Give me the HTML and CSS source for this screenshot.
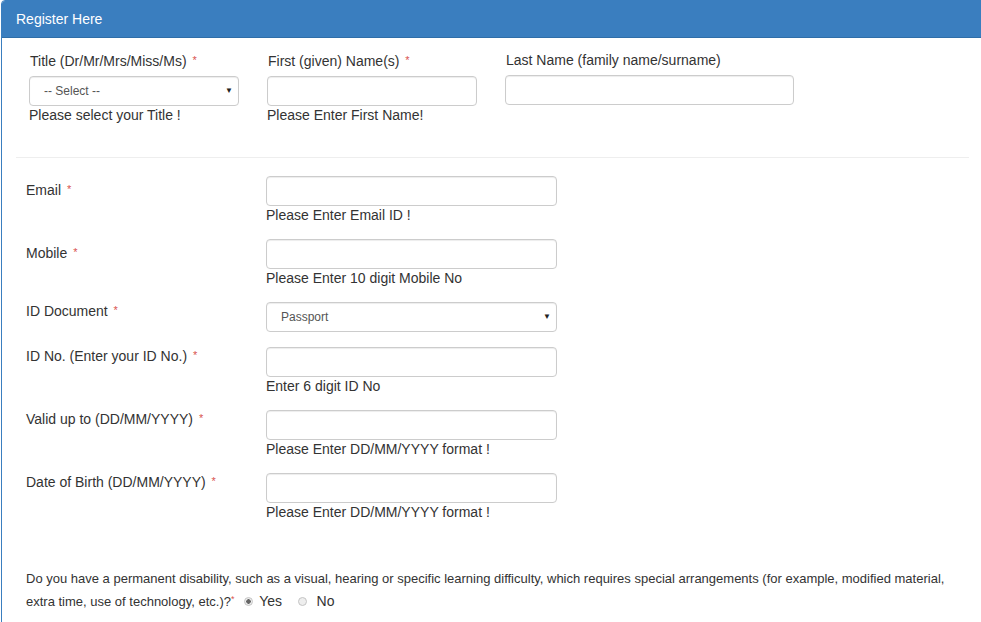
FILE: index.html
```html
<!DOCTYPE html>
<html lang="en">
<head>
    <meta charset="UTF-8">
    <meta name="viewport" content="width=device-width, initial-scale=1.0">
    <title>Register Here</title>
    <link rel="stylesheet" href="styles.css">
</head>
<body>

    <div class="panel">
        <div class="panel-heading">Register Here</div>
        <div class="panel-body">

            <!-- Name row -->
            <div class="name-row">
                <div class="field">
                    <label>Title (Dr/Mr/Mrs/Miss/Ms) <span class="req">*</span></label>
                    <div class="select-wrap">
                        <select class="control">
                            <option>-- Select --</option>
                            <option>Dr</option>
                            <option>Mr</option>
                            <option>Mrs</option>
                            <option>Miss</option>
                            <option>Ms</option>
                        </select>
                    </div>
                    <div class="help">Please select your Title !</div>
                </div>
                <div class="field">
                    <label>First (given) Name(s) <span class="req">*</span></label>
                    <input type="text" class="control">
                    <div class="help">Please Enter First Name!</div>
                </div>
                <div class="field">
                    <label>Last Name (family name/surname)</label>
                    <input type="text" class="control">
                </div>
            </div>

            <hr>

            <!-- Detail rows -->
            <div class="form-row">
                <label class="row-label first">Email <span class="req">*</span></label>
                <div>
                    <input type="text" class="control">
                    <div class="help">Please Enter Email ID !</div>
                </div>
            </div>
            <div class="form-row">
                <label class="row-label first">Mobile <span class="req">*</span></label>
                <div>
                    <input type="text" class="control">
                    <div class="help">Please Enter 10 digit Mobile No</div>
                </div>
            </div>
            <div class="form-row">
                <label class="row-label">ID Document <span class="req">*</span></label>
                <div class="select-wrap">
                    <select class="control">
                        <option>Passport</option>
                        <option>Driving Licence</option>
                        <option>National ID Card</option>
                    </select>
                </div>
            </div>
            <div class="form-row">
                <label class="row-label">ID No. (Enter your ID No.) <span class="req">*</span></label>
                <div>
                    <input type="text" class="control">
                    <div class="help">Enter 6 digit ID No</div>
                </div>
            </div>
            <div class="form-row">
                <label class="row-label">Valid up to (DD/MM/YYYY) <span class="req">*</span></label>
                <div>
                    <input type="text" class="control">
                    <div class="help">Please Enter DD/MM/YYYY format !</div>
                </div>
            </div>
            <div class="form-row">
                <label class="row-label">Date of Birth (DD/MM/YYYY) <span class="req">*</span></label>
                <div>
                    <input type="text" class="control">
                    <div class="help">Please Enter DD/MM/YYYY format !</div>
                </div>
            </div>

            <p class="question">
                Do you have a permanent disability, such as a visual, hearing or specific learning difficulty, which requires special arrangements (for example, modified material, extra time, use of technology, etc.)?<span class="req tight">*</span>
                <label class="radio"><input type="radio" name="disability" checked>Yes</label>
                <label class="radio no"><input type="radio" name="disability">No</label>
            </p>

        </div>
    </div>

</body>
</html>
```

FILE: styles.css
```css
body {
    font-family: "Liberation Sans", Arial, sans-serif;
    font-size: 14px;
    color: #333;
    margin: 0;
    background-color: #fff;
    overflow: hidden;
}

.panel {
    margin-left: 1px;
    width: 984px;
    border: 1px solid #3a7ebf;
    border-radius: 4px;
}

.panel-heading {
    background-color: #3a7ebf;
    color: #fff;
    padding: 8px 15px 8px 14px;
    line-height: 20px;
    border-bottom: 1px solid #2f6ea8;
    border-radius: 3px 3px 0 0;
}

.panel-body {
    padding: 12px 15px 60px 15px;
}

.control {
    display: block;
    box-sizing: border-box;
    width: 100%;
    height: 30px;
    padding: 4px 14px;
    font-family: inherit;
    font-size: 12px;
    color: #555;
    background-color: #fff;
    border: 1px solid #ccc;
    border-radius: 4px;
    box-shadow: inset 0 1px 1px rgba(0, 0, 0, 0.075);
}

select.control {
    -webkit-appearance: none;
    appearance: none;
}

.select-wrap {
    position: relative;
}

.select-wrap::after {
    content: "\25BC";
    position: absolute;
    right: 6px;
    top: 10px;
    font-size: 8px;
    color: #222;
    pointer-events: none;
}

.help {
    line-height: 18px;
}

.req {
    color: #d9534f;
    font-size: 11px;
    vertical-align: 2px;
    margin-left: 2px;
}

.req.tight {
    margin-left: 0;
    font-size: 9px;
    vertical-align: 4px;
}

/* first row with three columns */
.name-row {
    display: grid;
    grid-template-columns: 210px 210px 289px;
    column-gap: 28px;
    padding-left: 12px;
}

.name-row label {
    display: block;
    line-height: 20px;
    margin-bottom: 5px;
    padding-left: 1px;
}

hr {
    border: 0;
    border-top: 1px solid #eee;
    margin: 33px 2px 18px -1px;
}

/* label left, input right */
.form-row {
    display: grid;
    grid-template-columns: 240px 291px;
    padding-left: 9px;
    margin-bottom: 15px;
}

.row-label {
    line-height: 16px;
}

.row-label.first {
    line-height: 20px;
    padding-top: 3px;
}

.question {
    margin: 47px 0 0 0;
    padding-left: 9px;
    width: 920px;
    font-size: 13px;
    line-height: 21px;
}

.radio {
    margin-left: 6px;
    margin-right: 6px;
    font-size: 14px;
}

.radio input {
    -webkit-appearance: none;
    appearance: none;
    width: 9px;
    height: 9px;
    margin: 0 6px 0 0;
    border: 1px solid #c4c4c4;
    border-radius: 50%;
    background-color: #eee;
    vertical-align: 0;
}

.radio.no input {
    margin-right: 10px;
}

.radio input:checked {
    background: radial-gradient(circle, #666 0, #666 2px, #eee 2.5px);
}
```
